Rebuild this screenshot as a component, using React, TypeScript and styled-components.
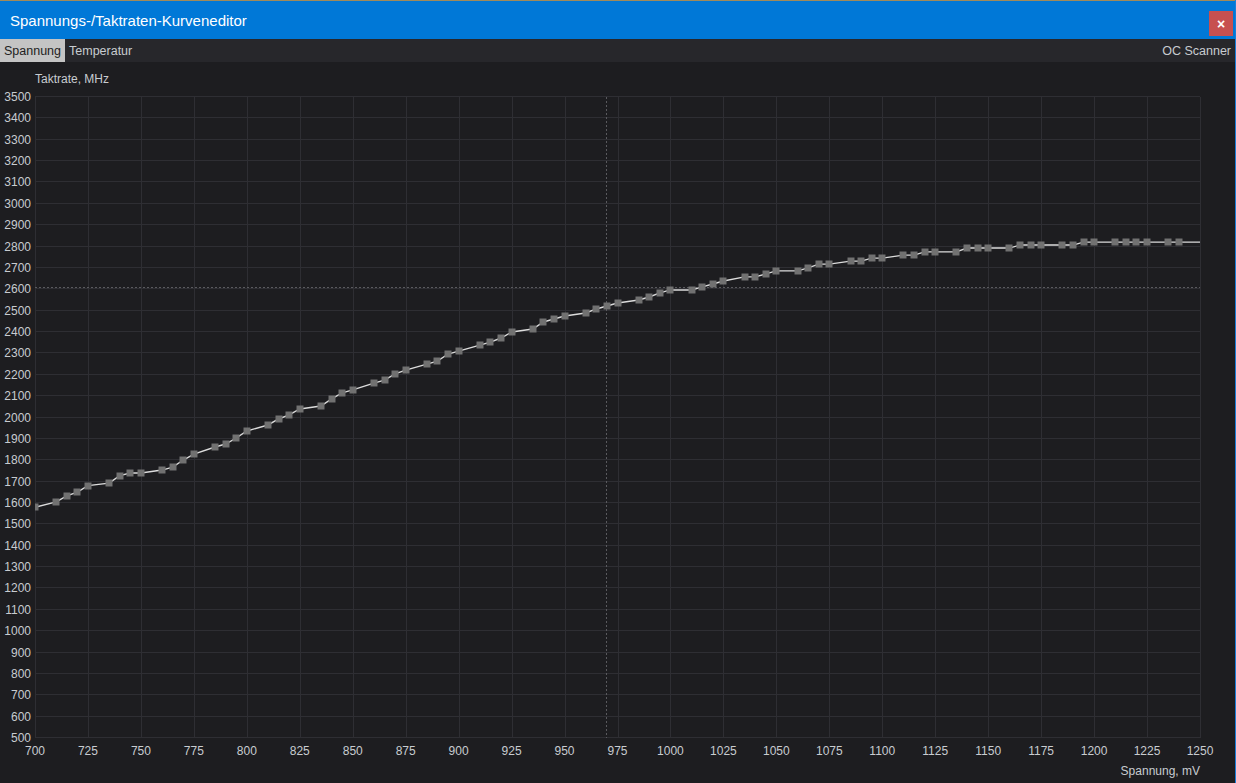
import React from "react";
import styled, { createGlobalStyle } from "styled-components";

const Global = createGlobalStyle`
  html, body { margin: 0; padding: 0; background: #1d1d20; overflow: hidden; }
  #root { width: 1236px; height: 783px; }
`;

const Window = styled.div`
  width: 1236px;
  height: 783px;
  box-sizing: border-box;
  display: flex;
  flex-direction: column;
  background: #1d1d20;
  border-right: 1px solid #1a7fd8;
  font-family: "Liberation Sans", Arial, sans-serif;
`;

const TitleBar = styled.div`
  height: 39px;
  box-sizing: border-box;
  border-top: 1px solid #a08a5a;
  background: #0078d7;
  display: flex;
  align-items: center;
  padding: 0 2px 0 10px;
  flex-shrink: 0;
`;

const Title = styled.div`
  flex: 1;
  color: #ffffff;
  font-size: 15px;
  margin-top: 0px;
`;

const CloseButton = styled.div`
  width: 24px;
  height: 25px;
  margin-top: 7px;
  background: #c75050;
  color: #ffffff;
  font-size: 14px;
  font-weight: bold;
  display: flex;
  align-items: center;
  justify-content: center;
`;

const TabBar = styled.div`
  height: 23px;
  background: #27272b;
  display: flex;
  align-items: stretch;
  flex-shrink: 0;
  font-size: 12.5px;
`;

const Tab = styled.div<{ $active?: boolean }>`
  display: flex;
  align-items: center;
  padding: 0 4px;
  min-width: ${(p) => (p.$active ? "57px" : "0")};
  background: ${(p) => (p.$active ? "#c4c4c4" : "transparent")};
  color: ${(p) => (p.$active ? "#1e1e22" : "#c8ccd0")};
`;

const Spacer = styled.div`
  flex: 1;
`;

const ChartArea = styled.div`
  flex: 1;
  display: flex;
`;

const ChartSvg = styled.svg`
  display: block;
  font-family: "Liberation Sans", Arial, sans-serif;
`;

const X0 = 35;
const X1 = 1200;
const Y0 = 738; // 500 MHz
const Y1 = 97; // 3500 MHz
const xOf = (mv: number) => X0 + ((mv - 700) / 550) * (X1 - X0);
const yOf = (mhz: number) => Y0 - ((mhz - 500) / 3000) * (Y0 - Y1);

const DATA: [number, number][] = [
  [700, 1580], [710, 1605], [715, 1633], [720, 1651], [725, 1681],
  [735, 1693], [740, 1728], [745, 1740], [750, 1740],
  [760, 1754], [765, 1768], [770, 1801], [775, 1829],
  [785, 1862], [790, 1876], [795, 1904], [800, 1937],
  [810, 1965], [815, 1993], [820, 2012], [825, 2040],
  [835, 2054], [840, 2087], [845, 2115], [850, 2129],
  [860, 2161], [865, 2175], [870, 2204], [875, 2222],
  [885, 2250], [890, 2264], [895, 2297], [900, 2311],
  [910, 2339], [915, 2353], [920, 2372], [925, 2400],
  [935, 2414], [940, 2447], [945, 2461], [950, 2475],
  [960, 2489], [965, 2508], [970, 2522], [975, 2536],
  [985, 2550], [990, 2564], [995, 2583], [1000, 2597],
  [1010, 2597], [1015, 2611], [1020, 2625], [1025, 2639],
  [1035, 2658], [1040, 2658], [1045, 2672], [1050, 2686],
  [1060, 2686], [1065, 2700], [1070, 2718], [1075, 2718],
  [1085, 2732], [1090, 2732], [1095, 2746], [1100, 2746],
  [1110, 2760], [1115, 2760], [1120, 2775], [1125, 2775],
  [1135, 2775], [1140, 2793], [1145, 2793], [1150, 2793],
  [1160, 2793], [1165, 2807], [1170, 2807], [1175, 2807],
  [1185, 2807], [1190, 2807], [1195, 2821], [1200, 2821],
  [1210, 2821], [1215, 2821], [1220, 2821], [1225, 2821],
  [1235, 2821], [1240, 2821],
];

const xTicks = Array.from({ length: 23 }, (_, i) => 700 + i * 25);
const yTicks = Array.from({ length: 31 }, (_, i) => 500 + i * 100);

const crisp = (v: number) => Math.round(v) + 0.5;

function Chart() {
  const pts = DATA.map(([mv, f]) => [xOf(mv), yOf(f)] as [number, number]);
  const linePts = [[X0, pts[0][1] + 0.6] as [number, number], ...pts, [X1, pts[pts.length - 1][1]] as [number, number]];
  return (
    <ChartSvg width={1235} height={721} viewBox="0 62 1235 721">
      <defs>
        <clipPath id="plot">
          <rect x={X0} y={Y1 - 5} width={X1 - X0} height={Y0 - Y1 + 5} />
        </clipPath>
      </defs>
      <text x={35} y={83} fill="#c8ccd0" fontSize={12}>Taktrate, MHz</text>
      {xTicks.map((t) => (
        <line key={"vx" + t} x1={crisp(xOf(t))} x2={crisp(xOf(t))} y1={Y1} y2={Y0} stroke="#2e2e33" strokeWidth={1} />
      ))}
      {yTicks.map((t) => (
        <line key={"hy" + t} x1={X0} x2={X1} y1={crisp(yOf(t)) - 1} y2={crisp(yOf(t)) - 1} stroke="#2e2e33" strokeWidth={1} />
      ))}
      {yTicks.map((t) => (
        <text key={"ly" + t} x={31} y={yOf(t) + 4} fill="#c8ccd0" fontSize={12} textAnchor="end">{t}</text>
      ))}
      {xTicks.map((t) => (
        <text key={"lx" + t} x={xOf(t)} y={755} fill="#c8ccd0" fontSize={12} textAnchor="middle">{t}</text>
      ))}
      <text x={1200} y={775} fill="#c8ccd0" fontSize={12} textAnchor="end">Spannung, mV</text>
      <line x1={606.5} x2={606.5} y1={Y1} y2={Y0} stroke="#5a5a5e" strokeWidth={1} strokeDasharray="2 2" />
      <line x1={X0} x2={X1} y1={287.5} y2={287.5} stroke="#5a5a5e" strokeWidth={1} strokeDasharray="2 2" />
      <g clipPath="url(#plot)">
        <polyline
          points={linePts.map((p) => p.join(",")).join(" ")}
          fill="none"
          stroke="#dcdcdc"
          strokeWidth={1.4}
        />
        {pts.map(([x, y], i) => (
          <rect key={i} x={Math.round(x) - 3.5} y={Math.round(y) - 3.5} width={7} height={7} fill="#717171" />
        ))}
      </g>
    </ChartSvg>
  );
}

export default function App() {
  return (
    <>
      <Global />
      <Window>
        <TitleBar>
          <Title>Spannungs-/Taktraten-Kurveneditor</Title>
          <CloseButton>×</CloseButton>
        </TitleBar>
        <TabBar>
          <Tab $active>Spannung</Tab>
          <Tab>Temperatur</Tab>
          <Spacer />
          <Tab>OC Scanner</Tab>
        </TabBar>
        <ChartArea>
          <Chart />
        </ChartArea>
      </Window>
    </>
  );
}
